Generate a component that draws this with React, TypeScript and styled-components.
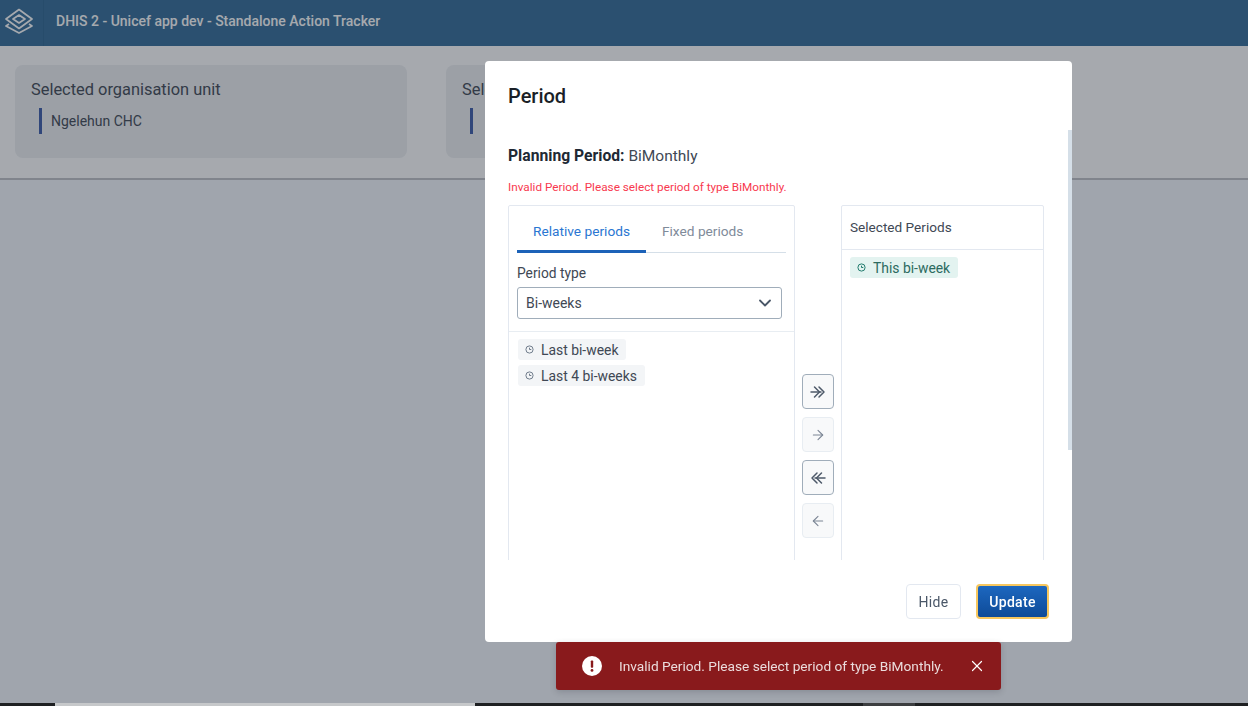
import React from "react";
import styled, { createGlobalStyle } from "styled-components";
import { ArrowLeft, ArrowRight, ChevronDown, X } from "lucide-react";

const GlobalStyle = createGlobalStyle`
  html, body {
    margin: 0;
    height: 100%;
    overflow: hidden;
    background: #f6f8fd;
    font-family: Roboto, "Liberation Sans", sans-serif;
  }
  * {
    box-sizing: border-box;
  }
`;

const LogoIcon = () => (
  <svg width="28" height="26" viewBox="0 0 28 26" fill="none" stroke="#ffffff" strokeWidth="1.7" strokeLinejoin="round">
    <path d="M14 7 L20 11 L14 15 L8 11 Z" />
    <path d="M14 1.5 L27 11 L14 20.5 L1 11 Z" />
    <path d="M4 16 L1 18 L14 25 L27 18 L24 16" />
  </svg>
);

const ClockIcon = ({ color }: { color: string }) => (
  <svg width="9" height="9" viewBox="0 0 10 10" fill="none" stroke={color} strokeWidth="1.1">
    <circle cx="5" cy="5" r="4" />
    <path d="M5 3 V5 H7" />
  </svg>
);

const DoubleRightIcon = () => (
  <svg width="18" height="18" viewBox="0 0 18 18" fill="none" stroke="#4e5a6a" strokeWidth="1.5" strokeLinecap="round" strokeLinejoin="round">
    <path d="M2 9 H12" />
    <path d="M5.5 4 L10.5 9 L5.5 14" />
    <path d="M10 4 L15 9 L10 14" />
  </svg>
);

const DoubleLeftIcon = () => (
  <svg width="18" height="18" viewBox="0 0 18 18" fill="none" stroke="#4e5a6a" strokeWidth="1.5" strokeLinecap="round" strokeLinejoin="round">
    <path d="M16 9 H6" />
    <path d="M12.5 4 L7.5 9 L12.5 14" />
    <path d="M8 4 L3 9 L8 14" />
  </svg>
);

const AlertIcon = () => (
  <svg width="20" height="20" viewBox="0 0 20 20">
    <circle cx="10" cy="10" r="10" fill="#ffffff" />
    <rect x="8.8" y="4.5" width="2.4" height="7.2" rx="0.8" fill="#891a1c" />
    <circle cx="10" cy="14.4" r="1.4" fill="#891a1c" />
  </svg>
);

const App = () => {
  return (
    <>
      <GlobalStyle />
      <Page>
        <Header>
          <LogoCell>
            <LogoIcon />
          </LogoCell>
          <AppTitle>DHIS 2 - Unicef app dev - Standalone Action Tracker</AppTitle>
        </Header>
        <SelectionBar>
          <SelectionCard>
            <CardTitle>Selected organisation unit</CardTitle>
            <CardValue>Ngelehun CHC</CardValue>
          </SelectionCard>
          <SelectionCard>
            <CardTitle>Selected period</CardTitle>
            <CardValue />
          </SelectionCard>
        </SelectionBar>
      </Page>

      <Backdrop>
        <Modal>
          <ModalTitle>Period</ModalTitle>
          <ModalBody>
            <PlanningLine>
              <strong>Planning Period:</strong> BiMonthly
            </PlanningLine>
            <ErrorText>Invalid Period. Please select period of type BiMonthly.</ErrorText>
            <Transfer>
              <AvailablePanel>
                <Tabs>
                  <Tab $active>Relative periods</Tab>
                  <Tab>Fixed periods</Tab>
                </Tabs>
                <FieldLabel>Period type</FieldLabel>
                <SelectBox>
                  Bi-weeks
                  <ChevronDown size={20} color="#4a5768" strokeWidth={2.2} />
                </SelectBox>
                <ChipList>
                  <Chip>
                    <ClockIcon color="#6e7a8a" />
                    Last bi-week
                  </Chip>
                  <Chip>
                    <ClockIcon color="#6e7a8a" />
                    Last 4 bi-weeks
                  </Chip>
                </ChipList>
              </AvailablePanel>
              <Actions>
                <ArrowButton>
                  <DoubleRightIcon />
                </ArrowButton>
                <ArrowButton $disabled>
                  <ArrowRight size={16} color="#7b8594" strokeWidth={1.6} />
                </ArrowButton>
                <ArrowButton>
                  <DoubleLeftIcon />
                </ArrowButton>
                <ArrowButton $disabled>
                  <ArrowLeft size={16} color="#7b8594" strokeWidth={1.6} />
                </ArrowButton>
              </Actions>
              <SelectedPanel>
                <SelectedHeader>Selected Periods</SelectedHeader>
                <SelectedList>
                  <Chip $selected>
                    <ClockIcon color="#1f7a6c" />
                    This bi-week
                  </Chip>
                </SelectedList>
              </SelectedPanel>
            </Transfer>
          </ModalBody>
          <ScrollThumb />
          <ModalFooter>
            <HideButton>Hide</HideButton>
            <UpdateButton>Update</UpdateButton>
          </ModalFooter>
        </Modal>
        <Toast>
          <AlertIcon />
          <ToastText>Invalid Period. Please select period of type BiMonthly.</ToastText>
          <X size={18} color="#ffffff" strokeWidth={1.6} />
        </Toast>
      </Backdrop>

      <BottomStrip>
        <StripThumb />
        <StripSegment />
      </BottomStrip>
    </>
  );
};

const Page = styled.div`
  height: 706px;
  display: flex;
  flex-direction: column;
`;

const Header = styled.header`
  height: 46px;
  flex: none;
  display: flex;
  align-items: center;
  background: #326c98;
`;

const LogoCell = styled.div`
  width: 44px;
  height: 100%;
  display: flex;
  align-items: center;
  justify-content: center;
  padding: 0 5px 4px 0;
  border-right: 1px solid #2c6590;
`;

const AppTitle = styled.div`
  margin-left: 12px;
  margin-top: -5px;
  font-size: 14px;
  font-weight: 500;
  color: #ffffff;
`;

const SelectionBar = styled.section`
  height: 134px;
  flex: none;
  display: grid;
  grid-template-columns: 392px 392px;
  column-gap: 39px;
  padding: 19px 15px 0;
  background: #ffffff;
  border-bottom: 2px solid #c0c2c6;
`;

const SelectionCard = styled.div`
  height: 93px;
  padding: 15px 16px;
  background: #eef0f2;
  border-radius: 8px;
`;

const CardTitle = styled.div`
  font-size: 16.4px;
  line-height: 19px;
  color: #404854;
`;

const CardValue = styled.div`
  margin: 9px 0 0 8px;
  height: 26px;
  display: flex;
  align-items: center;
  padding-left: 9px;
  border-left: 3px solid #3b5ba9;
  font-size: 14px;
  color: #404854;
`;

const BottomStrip = styled.div`
  position: fixed;
  left: 0;
  right: 0;
  bottom: 0;
  height: 3px;
  background: #1e2022;
`;

const StripThumb = styled.div`
  position: absolute;
  left: 55px;
  top: 0;
  bottom: 0;
  width: 420px;
  background: #c6c8ca;
`;

const StripSegment = styled.div`
  position: absolute;
  left: 863px;
  top: 0;
  bottom: 0;
  width: 52px;
  background: #3c3e40;
`;

const Backdrop = styled.div`
  position: fixed;
  inset: 0;
  background: rgba(33, 41, 52, 0.4);
`;

const Modal = styled.div`
  position: absolute;
  left: 485px;
  top: 61px;
  width: 587px;
  height: 581px;
  display: flex;
  flex-direction: column;
  background: #ffffff;
  border-radius: 4px;
`;

const ModalTitle = styled.h1`
  margin: 0;
  height: 69px;
  flex: none;
  padding: 23px 23px 0;
  font-size: 20px;
  line-height: 24px;
  font-weight: 500;
  color: #1a1f27;
`;

const ModalBody = styled.div`
  flex: 1;
  min-height: 0;
  overflow: hidden;
  padding: 16px 28px 0 23px;
`;

const ScrollThumb = styled.div`
  position: absolute;
  right: 0;
  top: 69px;
  width: 4px;
  height: 320px;
  background: #d5dfe8;
`;

const PlanningLine = styled.div`
  font-size: 15.5px;
  line-height: 19px;
  color: #404854;

  strong {
    font-weight: 700;
    font-size: 15.7px;
    color: #212934;
  }
`;

const ErrorText = styled.div`
  margin-top: 14px;
  font-size: 11.75px;
  line-height: 14px;
  color: #f8394f;
`;

const Transfer = styled.div`
  margin-top: 11px;
  display: flex;
  align-items: stretch;
  height: 420px;
`;

const AvailablePanel = styled.div`
  width: 287px;
  flex: none;
  border: 1px solid #e3e8f0;
  border-radius: 2px;
`;

const Tabs = styled.div`
  margin: 0 8px;
  height: 47px;
  display: flex;
  border-bottom: 1px solid #d5dfe8;
`;

const Tab = styled.div<{ $active?: boolean }>`
  height: 47px;
  padding: 17px 16px 0 16px;
  font-size: 13.7px;
  line-height: 17px;
  color: ${(p) => (p.$active ? "#2a76d2" : "#7f8b9a")};
  border-bottom: ${(p) => (p.$active ? "3px solid #1c62b8" : "none")};
`;

const FieldLabel = styled.div`
  margin: 12px 8px 0;
  font-size: 13.8px;
  line-height: 17px;
  color: #404854;
`;

const SelectBox = styled.div`
  margin: 5px 12px 0 8px;
  height: 32px;
  display: flex;
  align-items: center;
  justify-content: space-between;
  padding: 0 6px 0 8px;
  background: #ffffff;
  border: 1px solid #a0adba;
  border-radius: 3px;
  font-size: 14px;
  color: #404854;
`;

const ChipList = styled.div`
  margin-top: 12px;
  padding: 7px 9px;
  display: flex;
  flex-direction: column;
  align-items: flex-start;
  gap: 5px;
  border-top: 1px solid #e8edf2;
`;

const Chip = styled.div<{ $selected?: boolean }>`
  height: 21px;
  display: inline-flex;
  align-items: center;
  gap: 7px;
  padding: 0 8px 0 7px;
  border-radius: 3px;
  font-size: 13.9px;
  background: ${(p) => (p.$selected ? "#e3f3f0" : "#f3f5f7")};
  color: ${(p) => (p.$selected ? "#2c6b60" : "#404854")};
`;

const Actions = styled.div`
  width: 46px;
  flex: none;
  display: flex;
  flex-direction: column;
  align-items: center;
  padding-top: 169px;
  gap: 8px;
`;

const ArrowButton = styled.button<{ $disabled?: boolean }>`
  width: 32px;
  height: 35px;
  padding: 0;
  display: flex;
  align-items: center;
  justify-content: center;
  background: #f8f9fa;
  border: 1px solid ${(p) => (p.$disabled ? "#e8edf2" : "#a0adba")};
  border-radius: 4px;
`;

const SelectedPanel = styled.div`
  width: 203px;
  flex: none;
  border: 1px solid #e3e8f0;
  border-radius: 2px;
`;

const SelectedHeader = styled.div`
  height: 44px;
  padding: 13px 8px 0;
  font-size: 13.6px;
  line-height: 17px;
  color: #404854;
  border-bottom: 1px solid #e3e8f0;
`;

const SelectedList = styled.div`
  padding: 7px 8px;
`;

const ModalFooter = styled.div`
  height: 82px;
  flex: none;
  display: flex;
  justify-content: flex-end;
  gap: 15px;
  padding: 24px 23px 0;
`;

const HideButton = styled.button`
  width: 55px;
  height: 35px;
  padding: 0;
  background: #ffffff;
  border: 1px solid #e3e8f0;
  border-radius: 4px;
  font-family: inherit;
  font-size: 14px;
  letter-spacing: 0.3px;
  color: #4a5768;
`;

const UpdateButton = styled.button`
  width: 73px;
  height: 35px;
  padding: 0;
  background: linear-gradient(180deg, #1d67bf, #0e4b98);
  border: 2px solid #f7c75e;
  border-radius: 4px;
  font-family: inherit;
  font-size: 14px;
  font-weight: 500;
  letter-spacing: 0.3px;
  color: #ffffff;
`;

const Toast = styled.div`
  position: absolute;
  left: 556px;
  top: 642px;
  width: 445px;
  height: 48px;
  display: flex;
  align-items: center;
  padding-left: 26px;
  background: #891a1c;
  border-radius: 3px;
  box-shadow: 0 2px 6px rgba(33, 41, 52, 0.2);
`;

const ToastText = styled.div`
  margin: 0 24px 0 17px;
  font-size: 13.7px;
  color: #ebdcdc;
  white-space: nowrap;
`;

export default App;
